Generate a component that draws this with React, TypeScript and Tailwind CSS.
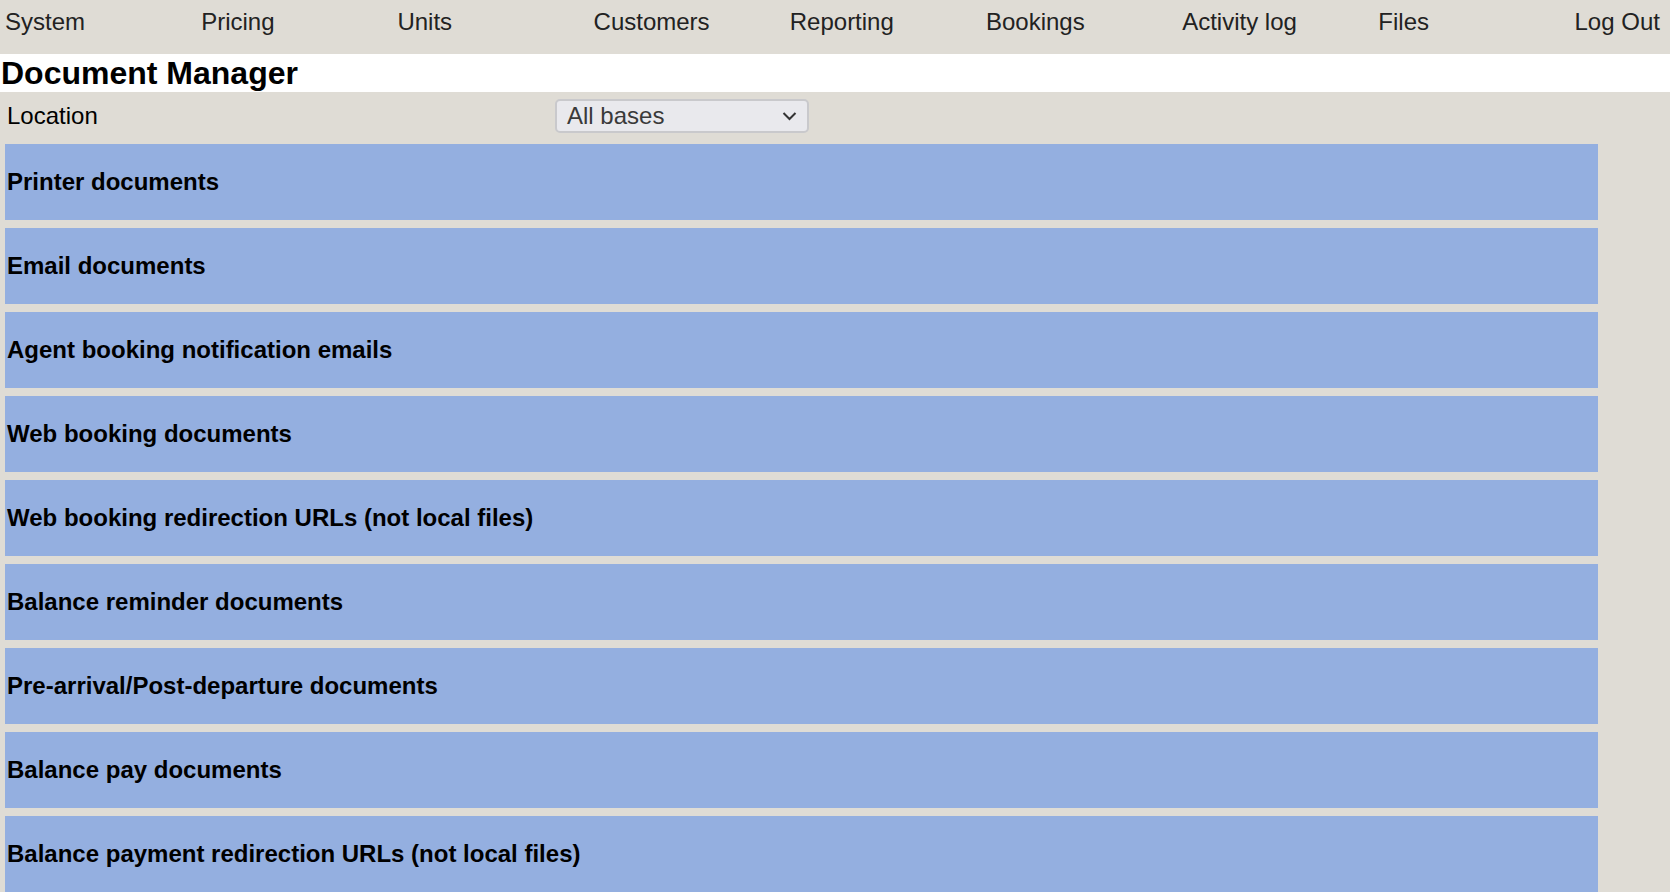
import React from "react";

const navItems = ["System", "Pricing", "Units", "Customers", "Reporting", "Bookings", "Activity log", "Files"];

const sections = [
  "Printer documents",
  "Email documents",
  "Agent booking notification emails",
  "Web booking documents",
  "Web booking redirection URLs (not local files)",
  "Balance reminder documents",
  "Pre-arrival/Post-departure documents",
  "Balance pay documents",
  "Balance payment redirection URLs (not local files)",
];

export default function App() {
  return (
    <div className="min-h-screen overflow-hidden bg-[#dfdcd5] font-['Liberation_Sans',Arial,sans-serif] text-black">
      <nav className="flex h-[54px] pl-[5px] pt-[8px] text-[24px] leading-[28px] text-[#222]">
        {navItems.map((n) => (
          <div key={n} className="w-[196.2px] shrink-0 whitespace-nowrap">
            {n}
          </div>
        ))}
        <div className="whitespace-nowrap">Log Out</div>
      </nav>
      <h1 className="h-[38px] bg-white pl-[1px] text-[32px] font-bold leading-[38px]">Document Manager</h1>
      <div className="flex h-[48px] items-center pl-[7px] text-[24px]">
        <span className="w-[548px] shrink-0">Location</span>
        <div className="flex h-[34px] w-[254px] items-center justify-between rounded-[5px] border-2 border-[#c9c9cc] bg-[#e9e9ed] pl-[10px] pr-[10px] text-[24px] text-[#3a3a3a]">
          <span>All bases</span>
          <svg width="15" height="10" viewBox="0 0 15 10" fill="none">
            <path d="M1.5 2 L7.5 8 L13.5 2" stroke="#333" strokeWidth="2" />
          </svg>
        </div>
      </div>
      <div className="flex w-[1598px] flex-col gap-[8px] pl-[5px] pt-[4px]">
        {sections.map((s) => (
          <div key={s} className="flex h-[76px] shrink-0 items-center bg-[#94afe0] pl-[2px] text-[24px] font-bold">
            {s}
          </div>
        ))}
      </div>
    </div>
  );
}
